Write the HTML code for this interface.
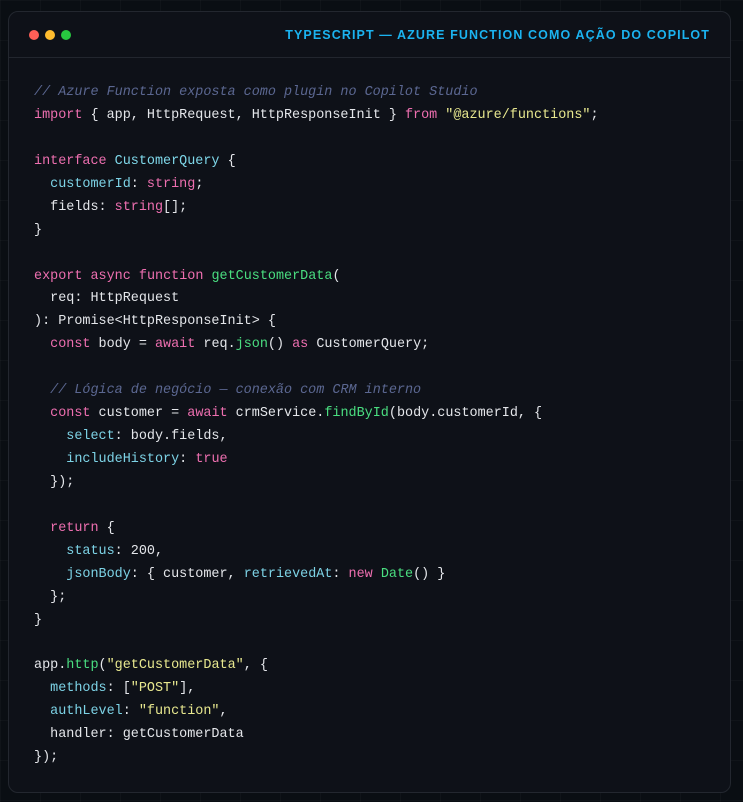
<!DOCTYPE html>
<html><head><meta charset="utf-8"><style>
html,body{margin:0;padding:0;width:743px;height:802px;overflow:hidden;background:#0a0e13;
background-image:linear-gradient(rgba(255,255,255,0.025) 1px,transparent 1px),linear-gradient(90deg,rgba(255,255,255,0.025) 1px,transparent 1px);background-size:40px 40px;}
.card{position:absolute;left:8px;top:11px;width:723px;height:782px;background:#0e1118;border:1px solid #23272f;border-radius:10px;box-sizing:border-box;}
.hdr{height:45px;border-bottom:1px solid #22262e;position:relative;}
.dot{position:absolute;top:18px;width:10px;height:10px;border-radius:50%;}
.title{position:absolute;right:20px;top:16px;font:bold 12.5px "Liberation Sans",sans-serif;color:#1bb3f0;letter-spacing:1.1px;}
pre{margin:0;position:absolute;left:25px;top:70px;font:13.45px/22.93px "Liberation Mono",monospace;color:#e4e6ea;}
.c{color:#5b6791;font-style:italic}.k{color:#ee6fb0}.s{color:#e8e88f}.p{color:#7dd3e6}.t{color:#7fd8ea}.f{color:#4ade80}
</style></head><body>
<div class="card">
<div class="hdr">
<div class="dot" style="left:20px;background:#ff5f57"></div>
<div class="dot" style="left:36px;background:#febc2e"></div>
<div class="dot" style="left:52px;background:#28c840"></div>
<div class="title">TYPESCRIPT — AZURE FUNCTION COMO AÇÃO DO COPILOT</div>
</div>
<pre><span class="c">// Azure Function exposta como plugin no Copilot Studio</span>
<span class="k">import</span> { app, HttpRequest, HttpResponseInit } <span class="k">from</span> <span class="s">"@azure/functions"</span>;

<span class="k">interface</span> <span class="t">CustomerQuery</span> {
  <span class="p">customerId</span>: <span class="k">string</span>;
  fields: <span class="k">string</span>[];
}

<span class="k">export</span> <span class="k">async</span> <span class="k">function</span> <span class="f">getCustomerData</span>(
  req: HttpRequest
): Promise&lt;HttpResponseInit&gt; {
  <span class="k">const</span> body = <span class="k">await</span> req.<span class="f">json</span>() <span class="k">as</span> CustomerQuery;

  <span class="c">// Lógica de negócio — conexão com CRM interno</span>
  <span class="k">const</span> customer = <span class="k">await</span> crmService.<span class="f">findById</span>(body.customerId, {
    <span class="p">select</span>: body.fields,
    <span class="p">includeHistory</span>: <span class="k">true</span>
  });

  <span class="k">return</span> {
    <span class="p">status</span>: 200,
    <span class="p">jsonBody</span>: { customer, <span class="p">retrievedAt</span>: <span class="k">new</span> <span class="f">Date</span>() }
  };
}

app.<span class="f">http</span>(<span class="s">"getCustomerData"</span>, {
  <span class="p">methods</span>: [<span class="s">"POST"</span>],
  <span class="p">authLevel</span>: <span class="s">"function"</span>,
  handler: getCustomerData
});</pre>
</div>
</body></html>
